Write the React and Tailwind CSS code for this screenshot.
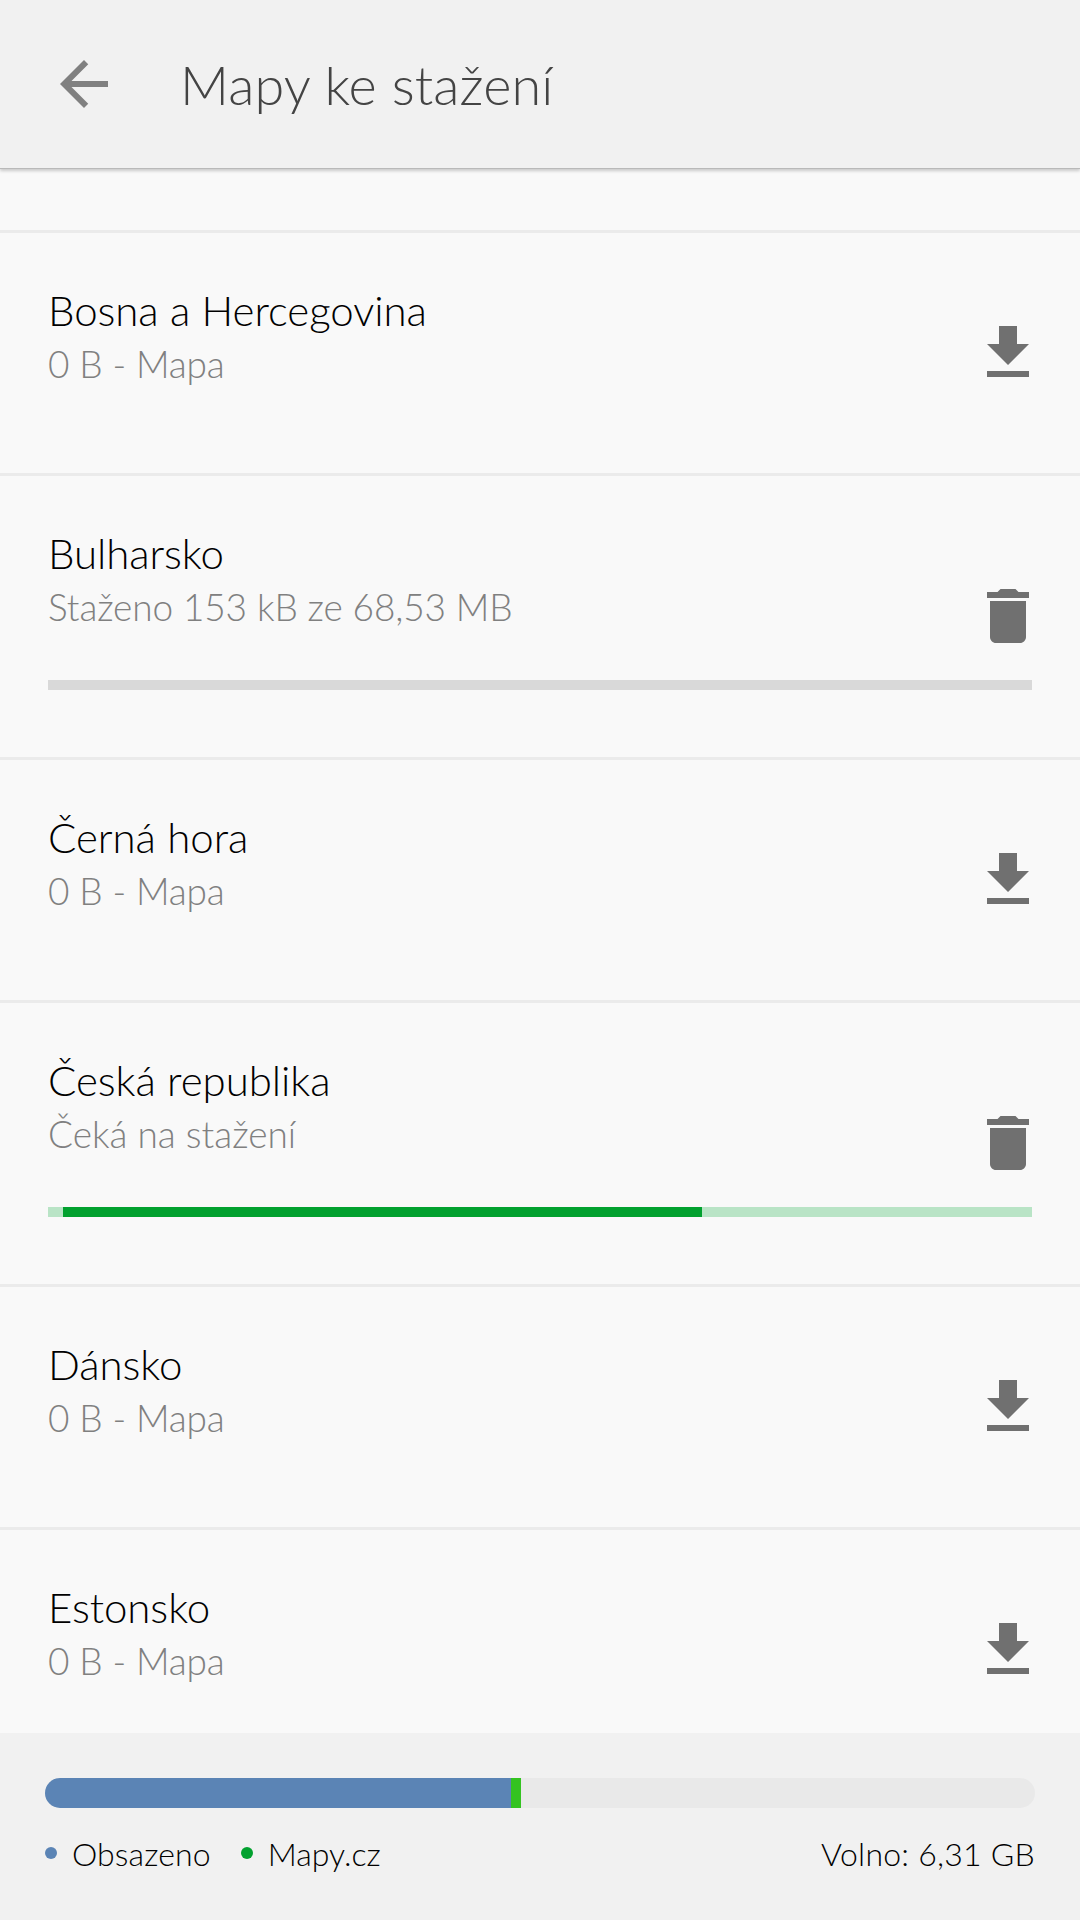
import clsx from 'clsx'

const MAPS = [
  { name: 'Bosna a Hercegovina', info: '0 B - Mapa' },
  { name: 'Bulharsko', info: 'Staženo 153 kB ze 68,53 MB', progress: 'paused' },
  { name: 'Černá hora', info: '0 B - Mapa' },
  { name: 'Česká republika', info: 'Čeká na stažení', progress: 'waiting' },
  { name: 'Dánsko', info: '0 B - Mapa' },
  { name: 'Estonsko', info: '0 B - Mapa' },
]

const ICONS = {
  back: 'M20 11H7.83l5.59-5.59L12 4l-8 8 8 8 1.41-1.41L7.83 13H20v-2z',
  download: 'M19 9h-4V3H9v6H5l7 7 7-7zM5 18v2h14v-2H5z',
  remove: 'M6 19c0 1.1.9 2 2 2h8c1.1 0 2-.9 2-2V7H6v12zM19 4h-3.5l-1-1h-5l-1 1H5v2h14V4z',
}

function Icon({ name, className }) {
  return (
    <svg viewBox="0 0 24 24" fill="currentColor" className={clsx('size-[72px] shrink-0', className)}>
      <path d={ICONS[name]} />
    </svg>
  )
}

function Progress({ state }) {
  if (state === 'paused') return <div className="mt-[50px] h-[10px] bg-[#d9d9d9]" />
  return (
    <div className="mt-[50px] h-[10px] bg-[#b9e4c6] pl-[15px]">
      <div className="h-full w-[639px] bg-[#02a12f]" />
    </div>
  )
}

function MapRow({ map }) {
  return (
    <li className={clsx('relative border-b-[3px] border-[#ebebeb] px-12 pt-[52px]', map.progress ? 'h-[284px]' : 'h-[243px]')}>
      <h2 className="text-[42px] leading-[50px] tracking-[-0.06px] text-black">{map.name}</h2>
      <p className={clsx('mt-[6px] text-[37px] leading-[46px] text-[#808080]', map.progress !== 'waiting' && 'tracking-[-0.12px]')}>
        {map.info}
      </p>
      {map.progress && <Progress state={map.progress} />}
      <button className={clsx('absolute inset-y-0 right-9 flex items-center text-[#707070]', map.progress && 'pb-px')}>
        <Icon name={map.progress ? 'remove' : 'download'} />
      </button>
    </li>
  )
}

function Legend({ color, children }) {
  return (
    <span className="flex items-center">
      <i className={clsx('mr-[15px] mb-[3px] size-3 rounded-full', color)} />
      {children}
    </span>
  )
}

export default function App() {
  return (
    <div className="flex h-[1920px] w-[1080px] flex-col overflow-hidden bg-[#f9f9f9] font-[Lato,sans-serif] font-light">
      <header className="z-10 flex h-[168px] shrink-0 items-center bg-[#f1f1f1] pl-12 shadow-[0_1px_0_#b9b9b9,0_3px_3px_0_#00000030]">
        <Icon name="back" className="text-[#808080]" />
        <h1 className="ml-[60px] pt-[2px] text-[54px] leading-[64px] tracking-[0.13px] text-[#444]">Mapy ke stažení</h1>
      </header>

      <main className="min-h-0 flex-1 overflow-hidden">
        <div className="h-[65px] border-b-[3px] border-[#ebebeb]" />
        <ul>
          {MAPS.map((m) => <MapRow key={m.name} map={m} />)}
        </ul>
      </main>

      <footer className="h-[187px] shrink-0 bg-[#f1f1f1] px-[45px] pt-[45px]">
        <div className="flex h-[30px] overflow-hidden rounded-full bg-[#e9e9e9]">
          <div className="w-[466px] bg-[#5b84b5]" />
          <div className="w-[10px] bg-[#34c321]" />
        </div>
        <div className="mt-[26px] flex items-center text-[32px] leading-[40px] text-black">
          <Legend color="bg-[#5b84b5]">
            <span className="tracking-[0.13px]">Obsazeno</span>
          </Legend>
          <span className="w-[30px]" />
          <Legend color="bg-[#02a12f]">Mapy.cz</Legend>
          <span className="ml-auto tracking-[0.24px]">Volno: 6,31 GB</span>
        </div>
      </footer>
    </div>
  )
}
